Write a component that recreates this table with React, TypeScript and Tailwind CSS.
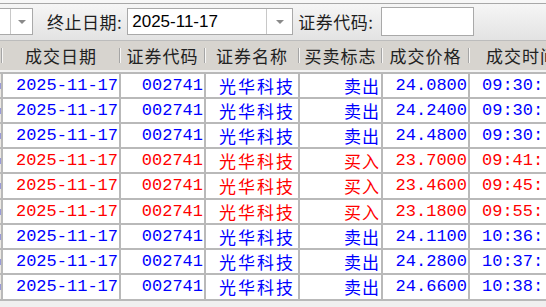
import React from 'react'

type Trade = { side: '买入' | '卖出'; price: string; time: string }

const trades: Trade[] = [
  { side: '卖出', price: '24.0800', time: '09:30:' },
  { side: '卖出', price: '24.2400', time: '09:30:' },
  { side: '卖出', price: '24.4800', time: '09:30:' },
  { side: '买入', price: '23.7000', time: '09:41:' },
  { side: '买入', price: '23.4600', time: '09:45:' },
  { side: '买入', price: '23.1800', time: '09:55:' },
  { side: '卖出', price: '24.1100', time: '10:36:' },
  { side: '卖出', price: '24.2800', time: '10:37:' },
  { side: '卖出', price: '24.6600', time: '10:38:' },
]

// row heights alternate a bit so the grid lands on the same lines as the screenshot
const rowHeights = ['h-[25px]', 'h-[25px]', 'h-[25px]', 'h-[25px]', 'h-[26px]', 'h-[25px]', 'h-[25px]', 'h-[25px]', 'h-[26px]']

const cols = 'grid grid-cols-[3px_118px_85px_94px_83px_87px_110px]'
const headers = ['成交日期', '证券代码', '证券名称', '买卖标志', '成交价格', '成交时间']

function DropArrow() {
  return (
    <div className="flex items-center justify-center h-full">
      <div className="w-0 h-0 border-l-[4px] border-r-[4px] border-t-[4px] border-l-transparent border-r-transparent border-t-[#8a8a8a]" />
    </div>
  )
}

function Cell({ children, className = '' }: { children?: React.ReactNode; className?: string }) {
  return (
    <div className={`border-r-2 border-b-2 border-[#b9b9b9] flex items-center overflow-hidden whitespace-nowrap ${className}`}>
      {children}
    </div>
  )
}

export default function App() {
  return (
    <div className="w-[546px] h-[307px] overflow-hidden bg-[#f0f0f0] text-[17px] font-['Liberation_Mono','Noto_Sans_CJK_SC',monospace]">
      {/* query bar */}
      <div className="h-[40px] border-t-[3px] border-[#f7f7f7] bg-gradient-to-b from-[#f6f6f6] to-[#e3e3e3] shadow-[inset_0_1px_0_#a8a8a8] flex items-center font-['Noto_Sans_CJK_SC',sans-serif] text-[#1e1e1e]">
        <div className="flex h-[27px] w-[33px] bg-white border-y border-r border-[#a9a9a9]">
          <div className="w-[11px] border-r border-[#c8c8c8]" />
          <div className="flex-1"><DropArrow /></div>
        </div>
        <span className="ml-[14px] tracking-[0.5px]">终止日期:</span>
        <div className="ml-[5px] flex h-[27px] w-[166px] bg-white border border-[#a9a9a9]">
          <div className="w-[139px] border-r border-[#c8c8c8] flex items-center pl-[4px] font-['Liberation_Sans',sans-serif] text-[17px] text-black">
            2025-11-17
          </div>
          <div className="flex-1"><DropArrow /></div>
        </div>
        <span className="ml-[5px] tracking-[0.5px]">证券代码:</span>
        <div className="ml-[8px] h-[29px] w-[93px] bg-white border border-[#a9a9a9]" />
      </div>

      {/* table header */}
      <div className={`${cols} h-[30px] bg-[#d7d4cf] border-t border-[#bcbcbc] font-['Noto_Sans_CJK_SC',sans-serif] text-[#222]`}>
        <div className="flex items-center justify-end">
          <div className="h-[15px] w-[2px] border-l border-[#a5a5a5] bg-white/80" />
        </div>
        {headers.map((h, i) => (
          <div key={h} className="flex items-center">
            <span className={`flex-1 text-center tracking-[1px] ${i === 5 ? 'text-left pl-[16px]' : ''}`}>{h}</span>
            {i < 5 && <div className="h-[15px] w-[2px] border-l border-[#a5a5a5] bg-white/80" />}
          </div>
        ))}
      </div>
      <div className="h-[2px] bg-[#f4f4f4]" />

      {/* trades */}
      <div className="bg-white border-t-2 border-[#b9b9b9]">
        {trades.map((t, i) => {
          const color = t.side === '买入' ? 'text-[#ff0000]' : 'text-[#0000ff]'
          return (
            <div key={i} className={`${cols} ${rowHeights[i]} ${color}`}>
              <Cell className="bg-[#ece9e4] border-r border-b-2">
                <div className="w-[2px] h-[6px] bg-[#9a9ad8]" />
              </Cell>
              <Cell className="justify-end pr-[1px]">2025-11-17</Cell>
              <Cell className="justify-end pr-[1px]">002741</Cell>
              <Cell className="justify-end pr-[3px] tracking-[2px] font-['Noto_Sans_CJK_SC',sans-serif]">光华科技</Cell>
              <Cell className="justify-end pr-[1px] tracking-[1px] font-['Noto_Sans_CJK_SC',sans-serif]">{t.side}</Cell>
              <Cell className="justify-end pr-[1px]">{t.price}</Cell>
              <Cell className="pl-[12px]">{t.time}</Cell>
            </div>
          )
        })}
      </div>
    </div>
  )
}
